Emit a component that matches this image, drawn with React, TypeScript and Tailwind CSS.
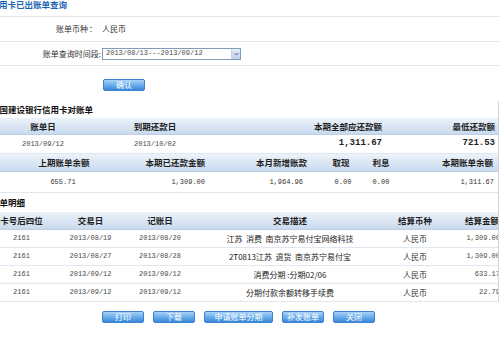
import React from "react";

const mono = "font-['Liberation_Mono','Noto_Sans_CJK_SC',monospace] text-[#4a4a4a]";

function Btn({ w, children }: { w: string; children: React.ReactNode }) {
  return (
    <div
      className={`${w} h-[12px] rounded-[2px] border border-[#3b82cf] bg-gradient-to-b from-[#a9d2f6] via-[#6aaeea] to-[#3a87d8] text-white text-[8px] leading-[10px] flex items-center justify-center`}
    >
      {children}
    </div>
  );
}

const Hd = "bg-gradient-to-b from-[#edf3fa] to-[#c9daee] border-b border-[#bccfe6] flex items-center font-bold text-[#1e1e1e] text-[8.5px]";
const Row = "border-b border-[#dfe7f1] flex items-center text-[#333]";

export default function App() {
  const details = [
    ["2161", "2013/08/19", "2013/08/20", "江苏  消费  南京苏宁易付宝网络科技", "人民币", "1,309.00"],
    ["2161", "2013/08/27", "2013/08/28", "2T0813江苏  退货  南京苏宁易付宝", "人民币", "1,309.00"],
    ["2161", "2013/09/12", "2013/09/12", "消费分期 :分期02/06", "人民币", "633.17"],
    ["2161", "2013/09/12", "2013/09/12", "分期付款余额转移手续费", "人民币", "22.79"],
  ];
  return (
    <div className="w-[500px] h-[354px] bg-white overflow-hidden font-['Noto_Sans_CJK_SC','Liberation_Sans',sans-serif] text-[8px] text-[#333]">
      <div className="h-[17px] border-b border-[#e6e6e6]">
        <div className="ml-[-9.5px] text-[8.5px] leading-[9px] font-bold text-[#1b64b2] whitespace-nowrap">
          信用卡已出账单查询
        </div>
      </div>
      <div className="h-[25px] border-b border-[#e6e6e6] flex items-center">
        <div className="w-[88px] text-right">账单币种</div>
        <div className="w-[8px] ml-[1px] text-center">：</div>
        <div className="ml-[5px]">人民币</div>
      </div>
      <div className="h-[24px] border-b border-[#e6e6e6] flex items-center">
        <div className="w-[102px] text-right pr-[1px] whitespace-nowrap">账单查询时间段:</div>
        <div className="w-[139px] h-[12px] border border-[#7f9db9] bg-white flex items-center">
          <div className={`${mono} text-[7px] flex-1 pl-[3px]`}>2013/08/13---2013/09/12</div>
          <div className="w-[9px] h-[10px] bg-gradient-to-b from-[#e3ecfa] to-[#bccfee] border-l border-[#c3d3ec] flex items-center justify-center">
            <svg width="5" height="4" viewBox="0 0 5 4">
              <path d="M0.5 1 L2.5 3 L4.5 1" stroke="#4d6185" strokeWidth="1" fill="none" />
            </svg>
          </div>
        </div>
      </div>
      <div className="pl-[103px] mt-[13px]">
        <Btn w="w-[42px]">确认</Btn>
      </div>

      <div className="mt-[10px] w-[499px] border-r border-[#d4d4d4] overflow-hidden">
        <div className="h-[17px] flex items-center">
          <div className="ml-[-9px] font-bold text-[8.5px] text-[#111] whitespace-nowrap">中国建设银行信用卡对账单</div>
        </div>
        <div className={`${Hd} h-[17px]`}>
          <div className="w-[86px] text-center">账单日</div>
          <div className="w-[138px] text-center">到期还款日</div>
          <div className="w-[158px] text-right">本期全部应还款额</div>
          <div className="w-[113px] text-right">最低还款额</div>
        </div>
        <div className={`${Row} h-[19px]`}>
          <div className={`w-[86px] text-center ${mono} text-[7px]`}>2013/09/12</div>
          <div className={`w-[138px] text-center ${mono} text-[7px]`}>2013/10/02</div>
          <div className="w-[158px] text-right font-['Liberation_Mono',monospace] text-[9px] font-bold text-[#222]">1,311.67</div>
          <div className="w-[113px] text-right font-['Liberation_Mono',monospace] text-[9px] font-bold text-[#222]">721.53</div>
        </div>
        <div className={`${Hd} h-[18px]`}>
          <div className="w-[126px] text-center pl-[2px]">上期账单余额</div>
          <div className="w-[79px] text-right">本期已还款金额</div>
          <div className="w-[102px] text-right">本月新增账款</div>
          <div className="w-[56px] text-center pl-[12px]">取现</div>
          <div className="w-[36px] text-center">利息</div>
          <div className="w-[94px] text-right">本期账单余额</div>
        </div>
        <div className={`${Row} h-[21px] ${mono} text-[7px]`}>
          <div className="w-[126px] text-center">655.71</div>
          <div className="w-[79px] text-right">1,309.00</div>
          <div className="w-[98px] text-right">1,964.96</div>
          <div className="w-[60px] text-center pl-[20px]">0.00</div>
          <div className="w-[36px] text-center">0.00</div>
          <div className="w-[96px] text-right pr-[1px]">1,311.67</div>
        </div>
        <div className="h-[19px] flex items-center">
          <div className="ml-[-9px] font-bold text-[8.5px] text-[#111] whitespace-nowrap">账单明细</div>
        </div>
        <div className={`${Hd} h-[18px] w-[540px]`}>
          <div className="w-[43px] flex justify-center whitespace-nowrap">卡号后四位</div>
          <div className="w-[95px] flex justify-center">交易日</div>
          <div className="w-[44px] flex justify-center">记账日</div>
          <div className="w-[216px] flex justify-center">交易描述</div>
          <div className="w-[34px] flex justify-center whitespace-nowrap">结算币种</div>
          <div className="w-[100px] flex justify-center whitespace-nowrap">结算金额</div>
        </div>
        {details.map((d, i) => (
          <div key={i} className={`${Row} h-[18px] w-[540px]`}>
            <div className={`w-[43px] flex justify-center ${mono} text-[7px]`}>{d[0]}</div>
            <div className={`w-[95px] flex justify-center ${mono} text-[7px]`}>{d[1]}</div>
            <div className={`w-[44px] flex justify-center ${mono} text-[7px] whitespace-nowrap`}>{d[2]}</div>
            <div className="w-[216px] flex justify-center whitespace-pre text-[#222]">{d[3]}</div>
            <div className="w-[34px] flex justify-center whitespace-nowrap">{d[4]}</div>
            <div className={`w-[100px] text-right pr-[32px] ${mono} text-[7px]`}>{d[5]}</div>
          </div>
        ))}
      </div>

      <div className="mt-[9px] pl-[102px] flex gap-[9px]">
        <Btn w="w-[42px]">打印</Btn>
        <Btn w="w-[42px]">下载</Btn>
        <Btn w="w-[69px]">申请账单分期</Btn>
        <Btn w="w-[42px]">补发账单</Btn>
        <Btn w="w-[42px]">关闭</Btn>
      </div>
    </div>
  );
}
